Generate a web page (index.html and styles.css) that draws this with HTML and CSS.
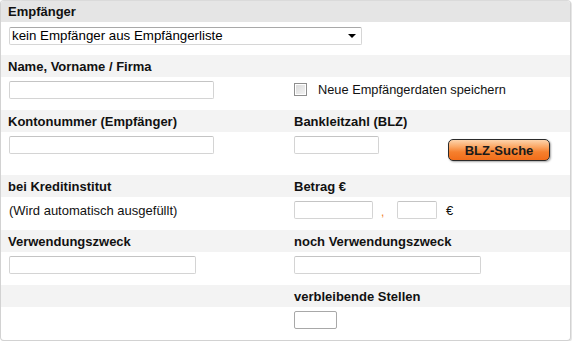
FILE: index.html
```html
<!DOCTYPE html>
<html lang="de">
<head>
<meta charset="utf-8">
<title>Empfänger</title>
<link rel="stylesheet" href="styles.css">
</head>
<body>
<div class="panel">
  <div class="band head"><span class="label">Empfänger</span></div>
  <div class="row row-select">
    <div class="select-wrap">
      <select class="select"><option>kein Empfänger aus Empfängerliste</option></select>
      <span class="arrow"></span>
    </div>
  </div>

  <div class="band grid">
    <span class="label">Name, Vorname / Firma</span>
    <span></span>
  </div>
  <div class="row grid">
    <div><input class="field w-wide" type="text"></div>
    <label class="check"><span class="box"></span><span>Neue Empfängerdaten speichern</span></label>
  </div>

  <div class="band grid">
    <span class="label">Kontonummer (Empfänger)</span>
    <span class="label">Bankleitzahl (BLZ)</span>
  </div>
  <div class="row grid row-tall">
    <div><input class="field w-wide" type="text"></div>
    <div class="blz">
      <input class="field w-blz" type="text">
      <button class="btn" type="button">BLZ-Suche</button>
    </div>
  </div>

  <div class="band grid">
    <span class="label">bei Kreditinstitut</span>
    <span class="label">Betrag €</span>
  </div>
  <div class="row grid">
    <div class="note">(Wird automatisch ausgefüllt)</div>
    <div class="amount">
      <input class="field w-euro" type="text">
      <span class="comma">,</span>
      <input class="field w-cent" type="text">
      <span class="cur">€</span>
    </div>
  </div>

  <div class="band grid">
    <span class="label">Verwendungszweck</span>
    <span class="label">noch Verwendungszweck</span>
  </div>
  <div class="row grid">
    <div><input class="field w-purpose" type="text"></div>
    <div><input class="field w-purpose" type="text"></div>
  </div>

  <div class="band grid">
    <span></span>
    <span class="label">verbleibende Stellen</span>
  </div>
  <div class="row grid">
    <div></div>
    <div><input class="field w-rest dark" type="text" value=""></div>
  </div>
</div>
</body>
</html>
```

FILE: styles.css
```css
* { box-sizing: border-box; }
html, body { margin: 0; padding: 0; background: #fff; }
body {
  font-family: "Liberation Sans", Arial, sans-serif;
  font-size: 12px;
  color: #111;
}
.panel {
  width: 571px;
  height: 341px;
  border: 1px solid #d2d2d2;
  border-top-color: #dadada;
  border-radius: 4px;
  box-shadow: 1px 1px 0 #e6e6e6;
  overflow: hidden;
  background: #fff;
}
.band {
  height: 22px;
  background: #f3f3f3;
  padding-left: 7px;
  display: flex;
  align-items: center;
}
.band.head { background: #e5e5e5; height: 21px; }
.grid {
  display: grid;
  grid-template-columns: 286px 1fr;
  align-items: start;
}
.row.grid { grid-template-columns: 285px 1fr; }
.band.grid { align-items: center; }
.label {
  font-weight: bold;
  font-size: 13px;
  color: #111;
}
.row {
  height: 33px;
  padding: 4px 0 0 8px;
}
.row-select { padding-top: 5px; }
.row-tall { height: 43px; }
.select-wrap {
  position: relative;
  width: 353px;
  height: 18px;
}
.select {
  appearance: none;
  -webkit-appearance: none;
  width: 100%;
  height: 18px;
  margin: 0;
  border: 1px solid #d6d6d6;
  border-top-color: #a9a9a9;
  border-radius: 2px;
  background: #fff;
  font-family: "Liberation Sans", Arial, sans-serif;
  font-size: 13.3px;
  color: #000;
  padding: 0 0 0 2px;
  line-height: 16px;
}
.arrow {
  position: absolute;
  right: 6px;
  top: 7px;
  width: 0;
  height: 0;
  border-left: 4px solid transparent;
  border-right: 4px solid transparent;
  border-top: 4px solid #000;
}
.field {
  display: block;
  height: 18px;
  margin: 0;
  border: 1px solid #d4d4d4;
  border-top-color: #c4c4c4;
  border-radius: 2px;
  background: #fff;
  padding: 0 2px;
  font-family: "Liberation Sans", Arial, sans-serif;
  font-size: 12px;
}
.field.dark { border-color: #a8a8a8; }
.w-wide { width: 205px; }
.w-blz { width: 85px; }
.w-euro { width: 79px; }
.w-cent { width: 40px; }
.w-purpose { width: 187px; }
.w-rest { width: 43px; }
.check {
  display: flex;
  align-items: center;
  gap: 11px;
  font-size: 12.8px;
  color: #111;
  padding-top: 1px;
}
.box {
  width: 13px;
  height: 13px;
  border: 1px solid #8e8e8e;
  background: linear-gradient(135deg, #d9d9d9, #f4f4f4);
  box-shadow: inset 0 0 0 1px #fff;
}
.blz {
  display: flex;
  align-items: flex-start;
}
.btn {
  margin: 3px 0 0 69px;
  width: 102px;
  height: 22px;
  border: 1px solid #2b2b2b;
  border-radius: 5px;
  background: linear-gradient(#fdd4ac 0%, #fba663 35%, #f6802e 60%, #f26d1a 100%);
  box-shadow: 1px 1px 2px rgba(0,0,0,0.35);
  font-family: "Liberation Sans", Arial, sans-serif;
  font-weight: bold;
  font-size: 13px;
  color: #1a1a1a;
  padding: 0;
}
.note {
  font-size: 13px;
  padding-top: 2px;
  color: #111;
}
.amount {
  display: flex;
  align-items: center;
}
.comma {
  color: #f07d2a;
  margin: 0 0 0 8px;
  width: 16px;
  font-size: 12px;
  padding-top: 4px;
}
.cur {
  margin-left: 9px;
  font-size: 13px;
}
```
